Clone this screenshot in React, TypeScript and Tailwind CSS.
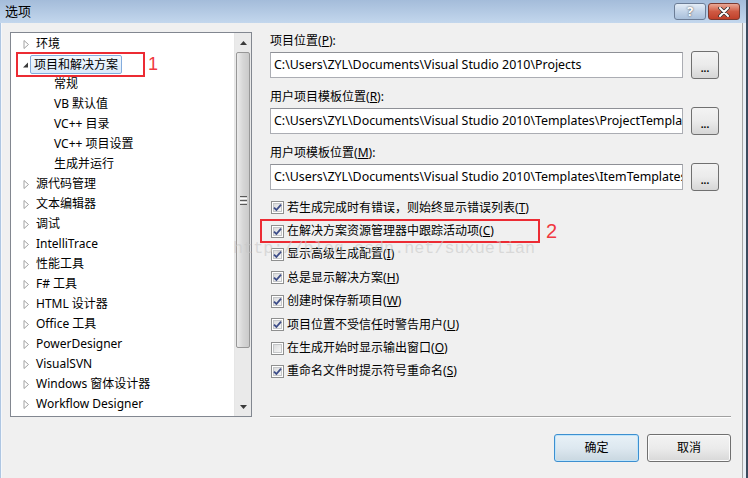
const font = "font-['Noto_Sans','Noto_Sans_CJK_SC',sans-serif]";

type TreeItem = { label: string; level: number; expanded?: boolean; selected?: boolean };

const treeItems: TreeItem[] = [
  { label: "环境", level: 0 },
  { label: "项目和解决方案", level: 0, expanded: true, selected: true },
  { label: "常规", level: 1 },
  { label: "VB 默认值", level: 1 },
  { label: "VC++ 目录", level: 1 },
  { label: "VC++ 项目设置", level: 1 },
  { label: "生成并运行", level: 1 },
  { label: "源代码管理", level: 0 },
  { label: "文本编辑器", level: 0 },
  { label: "调试", level: 0 },
  { label: "IntelliTrace", level: 0 },
  { label: "性能工具", level: 0 },
  { label: "F# 工具", level: 0 },
  { label: "HTML 设计器", level: 0 },
  { label: "Office 工具", level: 0 },
  { label: "PowerDesigner", level: 0 },
  { label: "VisualSVN", level: 0 },
  { label: "Windows 窗体设计器", level: 0 },
  { label: "Workflow Designer", level: 0 },
];

const paths = [
  { label: "项目位置", key: "P", value: "C:\\Users\\ZYL\\Documents\\Visual Studio 2010\\Projects" },
  { label: "用户项目模板位置", key: "R", value: "C:\\Users\\ZYL\\Documents\\Visual Studio 2010\\Templates\\ProjectTemplates" },
  { label: "用户项模板位置", key: "M", value: "C:\\Users\\ZYL\\Documents\\Visual Studio 2010\\Templates\\ItemTemplates" },
];

const options = [
  { label: "若生成完成时有错误，则始终显示错误列表", key: "T", checked: true },
  { label: "在解决方案资源管理器中跟踪活动项", key: "C", checked: true },
  { label: "显示高级生成配置", key: "I", checked: true },
  { label: "总是显示解决方案", key: "H", checked: true },
  { label: "创建时保存新项目", key: "W", checked: true },
  { label: "项目位置不受信任时警告用户", key: "U", checked: true },
  { label: "在生成开始时显示输出窗口", key: "O", checked: false },
  { label: "重命名文件时提示符号重命名", key: "S", checked: true },
];

function Arrow({ expanded }: { expanded?: boolean }) {
  if (expanded) {
    return (
      <svg width="7" height="9" viewBox="0 0 7 9" className="ml-[11px] mr-[5px]">
        <polygon points="6,2.5 6,7.5 1,7.5" fill="#3a3a3a" />
      </svg>
    );
  }
  return (
    <svg width="7" height="9" viewBox="0 0 7 9" className="ml-[12px] mr-[6px]">
      <polygon points="1,0.5 5.5,4.5 1,8.5" fill="#fff" stroke="#a2a2a2" strokeWidth="1" />
    </svg>
  );
}

function Checkbox({ checked }: { checked: boolean }) {
  return (
    <svg width="13" height="13" viewBox="0 0 13 13">
      <defs>
        <linearGradient id="cbg" x1="0" y1="0" x2="1" y2="1">
          <stop offset="0" stopColor="#d9dadb" />
          <stop offset="1" stopColor="#f7f7f7" />
        </linearGradient>
      </defs>
      <rect x="0.5" y="0.5" width="12" height="12" fill="#fff" stroke="#8e8f8f" />
      <rect x="2.5" y="2.5" width="8" height="8" fill="url(#cbg)" stroke="#c4c6c8" strokeWidth="1" />
      {checked && (
        <path d="M3 6.6 L5.4 9 L10 3.6" fill="none" stroke="#3d4d89" strokeWidth="1.8" />
      )}
    </svg>
  );
}

function Scrollbar() {
  return (
    <div className="w-[17px] h-full flex flex-col bg-[#eaeaea] border-l border-[#e6e6e6]">
      <div className="h-[19px] flex items-center justify-center">
        <svg width="7" height="4" viewBox="0 0 7 4">
          <polygon points="3.5,0 7,4 0,4" fill="#3a3a3a" />
        </svg>
      </div>
      <div className="mx-[1px] h-[296px] rounded-[2px] border border-[#979797] bg-linear-to-r from-[#ececec] via-[#d6d6d6] to-[#cacaca] flex items-center justify-center">
        <div className="flex flex-col gap-[1px]">
          <div className="w-[7px] h-[1px] bg-[#5a5a5a]" />
          <div className="w-[7px] h-[1px] bg-[#fafafa]" />
          <div className="w-[7px] h-[1px] bg-[#5a5a5a]" />
          <div className="w-[7px] h-[1px] bg-[#fafafa]" />
          <div className="w-[7px] h-[1px] bg-[#5a5a5a]" />
        </div>
      </div>
      <div className="flex-1" />
      <div className="h-[19px] flex items-center justify-center">
        <svg width="7" height="4" viewBox="0 0 7 4">
          <polygon points="0,0 7,0 3.5,4" fill="#3a3a3a" />
        </svg>
      </div>
    </div>
  );
}

function Tree() {
  return (
    <div className="w-[242px] h-[385px] border border-[#828790] bg-white flex">
      <div className="flex-1 flex flex-col pt-[1px]">
        {treeItems.map((item) => (
          <div key={item.label} className="h-[20px] flex items-center whitespace-nowrap">
            {item.level === 0 ? (
              <>
                <Arrow expanded={item.expanded} />
                <span
                  className={
                    item.selected
                      ? "h-[19px] px-[3px] -ml-[4px] leading-[17px] rounded-[2px] border border-[#84acdd] bg-linear-to-b from-[#f4f9fe] to-[#d9eafa]"
                      : ""
                  }
                >
                  {item.label}
                </span>
              </>
            ) : (
              <span className="ml-[43px]">{item.label}</span>
            )}
          </div>
        ))}
      </div>
      <Scrollbar />
    </div>
  );
}

function Accel({ label, k }: { label: string; k: string }) {
  return (
    <>
      {label}(<span className="underline">{k}</span>)
    </>
  );
}

export default function App() {
  return (
    <div className={`relative w-[748px] h-[478px] overflow-hidden bg-[#f0f0f0] flex flex-col text-[12px] text-black ${font}`}>
      <div className="h-[23px] flex items-start justify-between bg-linear-to-b from-[#a4bcda] to-[#c3d7ed] pl-[5px] pr-[6px] border-r-2 border-[#3b4a5e]">
        <span className="mt-[3px] text-[13px] leading-[16px]">选项</span>
        <div className="flex gap-[2px] mt-[3px]">
          <div className="w-[32px] h-[17px] rounded-[3px] border border-[#6c7d96] bg-linear-to-b from-[#e4edf7] via-[#c3d4e8] to-[#a9c0db] flex items-center justify-center text-white font-bold text-[13px] leading-none [text-shadow:0_0_2px_#333]">
            ?
          </div>
          <div className="w-[32px] h-[17px] rounded-[3px] border border-[#7c3a30] bg-linear-to-b from-[#e9a896] via-[#cf5a43] to-[#c0402a] flex items-center justify-center">
            <svg width="12" height="10" viewBox="0 0 12 10">
              <path d="M2 1 L10 9 M10 1 L2 9" stroke="#333" strokeWidth="3.6" strokeLinecap="round" />
              <path d="M2 1 L10 9 M10 1 L2 9" stroke="#fff" strokeWidth="2" strokeLinecap="round" />
            </svg>
          </div>
        </div>
      </div>

      <div className="flex-1 flex">
        <div className="w-[2px] bg-[#aec6e2] border-r border-[#f4f7fb]" />
        <div className="flex-1 flex pt-[9px] pl-[8px]">
          <Tree />
          <div className="ml-[18px] w-[461px] flex flex-col">
            {paths.map((p, i) => (
              <div key={p.key} className={i === 0 ? "pt-[1px]" : "pt-[10px]"}>
                <div className="h-[16px] leading-[16px]">
                  <Accel label={p.label} k={p.key} />:
                </div>
                <div className="mt-[2px] w-[449px] flex items-center">
                  <div className="w-[413px] h-[26px] border border-[#abadb3] border-t-[#8e9096] bg-white pl-[3px] leading-[24px] whitespace-nowrap overflow-hidden text-[12.4px]">
                    {p.value}
                  </div>
                  <div className="ml-[8px] w-[28px] h-[28px] rounded-[3px] border border-[#707070] bg-linear-to-b from-[#f3f3f3] via-[#ebebeb] to-[#d6d6d6] flex items-end justify-center pb-[5px] text-[10px] leading-none font-bold">
                    ...
                  </div>
                </div>
              </div>
            ))}

            <div className="mt-[5px] flex flex-col">
              {options.map((o) => (
                <div key={o.key} className="h-[23.4px] flex items-center gap-[3px] pl-[1px] whitespace-nowrap">
                  <Checkbox checked={o.checked} />
                  <span>
                    <Accel label={o.label} k={o.key} />
                  </span>
                </div>
              ))}
            </div>

            <div className="mt-[33px] h-[1px] bg-[#a0a0a0] border-b border-white box-content" />

            <div className="mt-[16px] flex justify-end gap-[8px]">
              <div className="w-[85px] h-[28px] rounded-[3px] border border-[#3c8fd0] shadow-[inset_0_0_0_1px_#bfe4fa] bg-linear-to-b from-[#e8f1f7] via-[#dde8f0] to-[#c9d7e0] flex items-center justify-center">
                确定
              </div>
              <div className="w-[84px] h-[28px] rounded-[3px] border border-[#707070] shadow-[inset_0_0_0_1px_#fbfbfb] bg-linear-to-b from-[#f3f3f3] via-[#ebebeb] to-[#d8d8d8] flex items-center justify-center">
                取消
              </div>
            </div>
          </div>
        </div>
        <div className="w-[6px] flex">
          <div className="w-[1px] bg-[#a5a5a5]" />
          <div className="w-[3px] bg-[#e9eef4]" />
          <div className="w-[2px] bg-[#3b4a5e]" />
        </div>
      </div>

      <div className="absolute left-[16px] top-[52px] w-[129px] h-[25px] border-2 border-[#ec2b33] pointer-events-none" />
      <div className="absolute left-[148px] top-[52px] text-[18px] leading-[24px] text-[#f0383f] font-['Liberation_Sans',sans-serif] pointer-events-none">
        1
      </div>
      <div className="absolute left-[260px] top-[219px] w-[280px] h-[24px] border-2 border-[#ec2b33] pointer-events-none" />
      <div className="absolute left-[546px] top-[218px] text-[20px] leading-[26px] text-[#f0383f] font-['Liberation_Sans',sans-serif] pointer-events-none">
        2
      </div>
      <div className="absolute left-[233px] top-[240px] text-[16.8px] leading-[18px] text-[#c8c8c8]/60 font-['Liberation_Mono',monospace] whitespace-nowrap pointer-events-none">
        http://blog.csdn.net/suxuelian
      </div>
    </div>
  );
}
